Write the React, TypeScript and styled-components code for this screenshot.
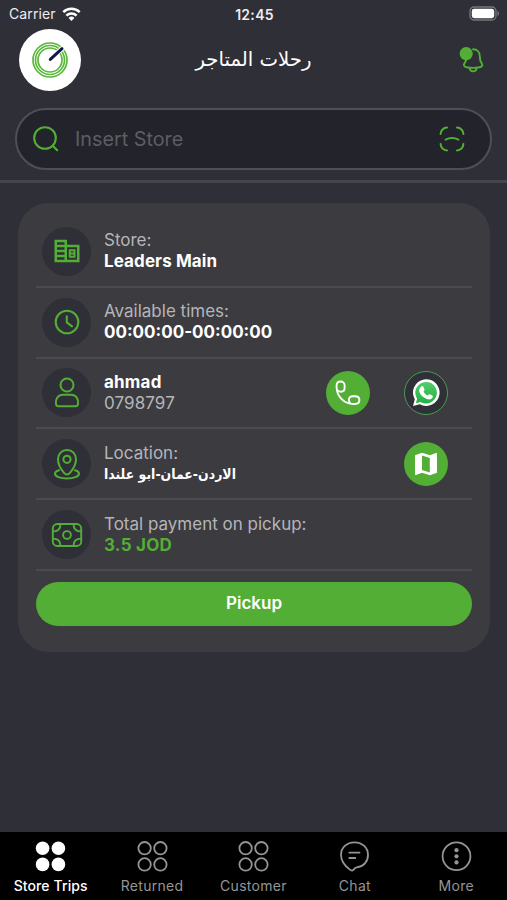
import React from "react";
import styled, { createGlobalStyle } from "styled-components";

const GREEN = "#53ae35";

const GlobalStyle = createGlobalStyle`
  * { box-sizing: border-box; }
  html, body { margin: 0; padding: 0; background: #2f2f38; }
  body { font-family: Inter, "DejaVu Sans", sans-serif; overflow: hidden; }
  svg { display: block; flex: none; }
`;

const Screen = styled.div`
  width: 507px;
  height: 900px;
  display: flex;
  flex-direction: column;
  background: #2f2f38;
  overflow: hidden;
`;

const StatusBar = styled.div`
  height: 28px;
  display: grid;
  grid-template-columns: 1fr auto 1fr;
  align-items: center;
  padding: 0 7px 0 9px;
  color: #ededf0;
`;

const Carrier = styled.div`
  display: flex;
  align-items: center;
  gap: 6px;
  font-size: 14px;
  letter-spacing: 0.12px;
  line-height: 16px;
`;

const Time = styled.div`
  font-size: 14px;
  font-weight: 600;
  letter-spacing: 0.3px;
`;

const BatterySlot = styled.div`
  display: flex;
  justify-content: flex-end;
  padding-bottom: 1px;
`;

const Header = styled.header`
  height: 64px;
  display: grid;
  grid-template-columns: 62px 1fr 62px;
  align-items: center;
  padding: 0 19px;
`;

const Logo = styled.div`
  width: 62px;
  height: 62px;
  border-radius: 50%;
  background: #fff;
  display: flex;
  align-items: center;
  justify-content: center;
`;

const Title = styled.h1`
  margin: 0;
  text-align: center;
  color: #fff;
  font-family: "DejaVu Sans", sans-serif;
  font-weight: 400;
  font-size: 19.7px;
  line-height: 28px;
`;

const BellSlot = styled.div`
  display: flex;
  justify-content: flex-end;
  padding-right: 3px;
`;

const SearchArea = styled.div`
  height: 91px;
  padding: 16px 15px 0;
  border-bottom: 3px solid #45454b;
`;

const SearchBox = styled.div`
  height: 62px;
  display: flex;
  align-items: center;
  border: 2px solid #4f4f56;
  border-radius: 31px;
  background: #22232b;
  padding: 0 25px 0 15px;
`;

const Placeholder = styled.span`
  flex: 1;
  margin-left: 15px;
  color: #5d5d63;
  font-size: 19.8px;
`;

const Card = styled.main`
  margin: 20px 17px 0 18px;
  height: 449px;
  border-radius: 31px;
  background: #3b3b40;
  padding: 14px 18px 0;
`;

const Row = styled.div`
  height: 70.8px;
  display: flex;
  align-items: center;
  padding: 0 24px 0 6px;
  border-bottom: 2px solid #4a4a50;
`;

const IconDisc = styled.div`
  width: 49px;
  height: 49px;
  flex: none;
  border-radius: 50%;
  background: #2f2f38;
  display: flex;
  align-items: center;
  justify-content: center;
`;

const Lines = styled.div`
  flex: 1;
  margin-left: 13px;
`;

const Line = styled.div<{ $tone?: "muted" | "strong" | "green"; $spacing?: number }>`
  height: 21px;
  line-height: 21px;
  white-space: nowrap;
  font-size: 17px;
  letter-spacing: ${(p) => p.$spacing ?? 0}px;
  font-weight: ${(p) => (p.$tone === "muted" ? 400 : 700)};
  color: ${(p) => (p.$tone === "muted" ? "#b5b5b8" : p.$tone === "green" ? GREEN : "#fff")};
`;

const ArabicLine = styled(Line)`
  font-family: "DejaVu Sans Condensed", "DejaVu Sans", sans-serif;
  font-stretch: condensed;
  font-size: 13.9px;
`;

const Actions = styled.div`
  display: flex;
  gap: 34px;
`;

const RoundButton = styled.button<{ $outline?: boolean }>`
  width: 44px;
  height: 44px;
  padding: 0;
  border-radius: 50%;
  border: ${(p) => (p.$outline ? "1.3px solid #4a9b52" : "0")};
  background: ${(p) => (p.$outline ? "#303039" : GREEN)};
  display: flex;
  align-items: center;
  justify-content: center;
`;

const PickupButton = styled.button`
  display: block;
  width: 436px;
  height: 44px;
  margin-top: 11px;
  padding: 0 0 2px;
  border: 0;
  border-radius: 22px;
  background: ${GREEN};
  color: #fff;
  font: 600 17px/20px Inter, sans-serif;
`;

const TabBar = styled.nav`
  height: 68px;
  margin-top: auto;
  flex: none;
  display: grid;
  grid-template-columns: repeat(5, 1fr);
  background: #000;
`;

const Tab = styled.div<{ $active?: boolean }>`
  display: flex;
  flex-direction: column;
  align-items: center;
  padding-top: 9px;
  gap: 6px;
  color: ${(p) => (p.$active ? "#fff" : "#959595")};
  font-size: 14px;
  font-weight: ${(p) => (p.$active ? 500 : 400)};
  line-height: 16px;
  letter-spacing: ${(p) => (p.$active ? 0.1 : 0.3)}px;
  white-space: nowrap;
`;

const Wifi = () => (
  <svg width="19" height="15" viewBox="0 0 19 15" fill="none" stroke="#fff" strokeWidth="2.5">
    <path d="M1.3 5.2a11.7 11.7 0 0 1 16.4 0" />
    <path d="M4.4 8.6a7.2 7.2 0 0 1 10.2 0" />
    <path d="M9.5 14 6.6 11a4.1 4.1 0 0 1 5.8 0Z" fill="#fff" stroke="none" />
  </svg>
);

const Battery = () => (
  <svg width="31" height="15" viewBox="0 0 31 15">
    <rect x="1" y="1" width="26" height="13" rx="4" fill="none" stroke="#77777e" strokeWidth="1.3" />
    <rect x="2.8" y="2.8" width="22.4" height="9.4" rx="2.4" fill="#fff" />
    <path d="M28.5 5v5c2.1-.8 2.1-4.2 0-5Z" fill="#77777e" />
  </svg>
);

const BrandMark = () => (
  <svg width="38" height="38" viewBox="0 0 38 38" fill="none">
    <g stroke="#58b83a" strokeWidth="1.7">
      <circle cx="19" cy="19" r="17" />
      <circle cx="19" cy="19" r="14.5" />
      <circle cx="19" cy="19" r="12" />
    </g>
    <path d="M25 13 32.5 6.3" stroke="#fff" strokeWidth="5" />
    <path d="M19.3 18.4 31 7.7" stroke="#111747" strokeWidth="3" strokeLinecap="round" />
  </svg>
);

const Bell = () => (
  <svg width="26" height="28" viewBox="0 0 26 28" fill="none" stroke={GREEN} strokeWidth="1.9" strokeLinecap="round" strokeLinejoin="round">
    <path d="M14 3.2c4.1 0 6.8 3.1 6.8 7.2 0 3.5.5 5 1.8 6.7 1.5 2 .7 3.7-2 4.200-4.300.7-8.700.7-13 0-2.800-.500-3.400-2.300-2-4.200C7 15.400 7.400 14 7.400 12" />
    <path d="M10.800 22.200c.2 4.200 6.500 4.200 6.700 0" />
    <circle cx="7.200" cy="7.600" r="6.600" fill={GREEN} stroke="none" />
  </svg>
);

const SearchIcon = () => (
  <svg width="28" height="28" viewBox="0 0 28 28" fill="none" stroke={GREEN} strokeWidth="2.1" strokeLinecap="round">
    <circle cx="13" cy="13" r="10.8" />
    <path d="m20.700 20.800 4.500 4.400" />
  </svg>
);

const ScanIcon = () => (
  <svg width="26" height="26" viewBox="0 0 26 26" fill="none" stroke={GREEN} strokeWidth="2" strokeLinecap="round">
    <path d="M1.600 8a6.600 6.600 0 0 1 6.400-6.400M18 1.600A6.600 6.600 0 0 1 24.400 8M24.400 18a6.600 6.600 0 0 1-6.400 6.400M8 24.400A6.600 6.600 0 0 1 1.600 18" />
    <path d="M6.600 13.600c4-2 8.800-2 12.800 0" />
  </svg>
);

const BuildingIcon = () => (
  <svg width="30" height="30" viewBox="0 0 24 24" fill={GREEN}>
    <path fillRule="evenodd" d="M12 7V3H2v18h20V7H12ZM10 19H4v-2h6v2Zm0-4H4v-2h6v2Zm0-4H4V9h6v2Zm0-4H4V5h6v2Zm10 12h-8V9h8v10Z" />
    <path fillRule="evenodd" d="M13.400 10.600h5.400v6.800h-5.400ZM15 12.200h2.200v1H15Zm0 2.500h2.200v1H15Z" />
  </svg>
);

const ClockIcon = () => (
  <svg width="26" height="26" viewBox="0 0 26 26" fill="none" stroke={GREEN} strokeWidth="2.1" strokeLinecap="round" strokeLinejoin="round">
    <circle cx="13" cy="13" r="11.300" />
    <path d="M12.800 7.200v6.100l5.200 4" />
  </svg>
);

const PersonIcon = () => (
  <svg width="26" height="32" viewBox="0 0 26 32" fill="none" stroke={GREEN} strokeWidth="2">
    <circle cx="13" cy="8" r="6.500" />
    <path d="M2 27c-.8-5.400 2.200-9.200 7-9.200h8c4.800 0 7.800 3.800 7 9.200-.2 1.700-.8 2.300-2.400 2.300H4.400C2.800 29.300 2.200 28.700 2 27Z" />
  </svg>
);

const PinIcon = () => (
  <svg width="28" height="32" viewBox="0 0 28 32" fill="none" stroke={GREEN} strokeWidth="2" strokeLinecap="round">
    <path d="M14 2c5.300 0 9 4 9 9.300 0 5-2.600 9.600-6 13.500-2 2.200-4 2.200-6 0-3.400-3.900-6-8.500-6-13.500C5 6 8.700 2 14 2Z" />
    <circle cx="14" cy="11.300" r="3.600" />
    <path d="M6 22.300c-3 .8-4 1.900-4 3.400 0 2.900 5.300 4.800 12 4.800s12-1.900 12-4.800c0-1.500-1-2.600-4-3.400" />
  </svg>
);

const CashIcon = () => (
  <svg width="32" height="26" viewBox="0 0 32 26" fill="none" stroke={GREEN} strokeWidth="1.9" strokeLinecap="round">
    <rect x="1.800" y="2" width="28.400" height="22" rx="4.500" />
    <circle cx="16" cy="13" r="3.900" />
    <path d="M2 9.400c4.700 0 7.400-2.700 7.400-7M30 9.400c-4.700 0-7.400-2.700-7.400-7M2 16.600c4.700 0 7.400 2.700 7.400 7M30 16.600c-4.700 0-7.400 2.700-7.400 7" />
  </svg>
);

const PhoneIcon = () => (
  <svg width="26" height="26" viewBox="0 0 26 26" fill="none" stroke="#fff" strokeWidth="1.900" strokeLinecap="round" strokeLinejoin="round">
    <path d="M1.600 7.500V5.600C1.600 3.100 3.300 1.500 5.600 1.500s4 1.600 4 4.100v2.500c0 2.300-1.500 3.600-3.600 3.600-1.700 0-3-.7-3.800-1.700M1.600 7.500C2 16.500 9 24 18.500 24h1.600c2.600 0 4.300-1.600 4.300-3.900s-1.700-3.900-4.300-3.900h-2.300c-2.500 0-4 1.400-4 3.600 0 1.400.5 2.500 1.500 3.600" />
  </svg>
);

const WhatsAppIcon = () => (
  <svg width="28" height="28" viewBox="0 0 28 28">
    <defs>
      <linearGradient id="chatFill" x1="0" x2="0" y1="0" y2="1">
        <stop offset="0" stopColor="#53ce6b" />
        <stop offset="1" stopColor="#24af43" />
      </linearGradient>
    </defs>
    <path d="M1 27 2.800 20.300A13.300 13.300 0 1 1 7.800 25.200Z" fill="#fff" />
    <path d="M3.900 24.200 5.100 19.700A10.800 10.800 0 1 1 8.400 22.900Z" fill="url(#chatFill)" />
    <path d="M9.100 7.700c.8-.8 1.900-.8 2.300.1l1.100 2.600c.2.600-.2 1.100-1 2 .9 1.900 2.400 3.300 4.400 4.200.8-1 1.200-1.500 1.800-1.300l2.700 1.300c.7.400.5 1.600-.1 2.500-1.200 1.600-3.600 1.700-6 .7-3.100-1.200-5.500-3.500-6.700-6.200-.9-2.200-.4-4.400 1.500-5.900Z" fill="#fff" />
  </svg>
);

const MapIcon = () => (
  <svg width="24" height="24" viewBox="0 0 24 24">
    <path d="M1 3.200 8 .7l8 2.600 6-2.300c.7-.2 1 .1 1 .7v19.100l-7 2.500-8-2.600-6 2.300c-.7.3-1 0-1-.7Z" fill="#fff" />
    <path d="M8 3.500 15.800 6v14.500L8 18Z" fill={GREEN} />
  </svg>
);

const FourDots = ({ filled }: { filled?: boolean }) => (
  <svg width="31" height="31" viewBox="0 0 31 31" fill={filled ? "currentColor" : "none"} stroke="currentColor" strokeWidth={filled ? 0 : 1.8}>
    {[7.2, 23.4].map((y) =>
      [7.6, 23.4].map((x) => <circle key={`${x}-${y}`} cx={x} cy={y} r={filled ? 6.8 : 6.2} />)
    )}
  </svg>
);

const ChatIcon = () => (
  <svg width="31" height="31" viewBox="0 0 31 31" fill="none" stroke="currentColor" strokeWidth="1.800" strokeLinecap="round" strokeLinejoin="round">
    <path d="M15.500 1.300C7.600 1.300 2 6.700 2 13.900c0 5.900 3.800 10.700 8.600 14.500 1.800 1.400 3.300 1.500 4.200.1.700-1.200 1.400-1.900 2.900-2.100C24.600 25.600 29 20.500 29 13.900 29 6.700 23.400 1.300 15.500 1.300Z" />
    <path d="M10.300 11.600h10.200M10.300 17h6" />
  </svg>
);

const MoreIcon = () => (
  <svg width="31" height="31" viewBox="0 0 31 31" fill="currentColor">
    <circle cx="15.500" cy="15.300" r="13.900" fill="none" stroke="currentColor" strokeWidth="1.800" />
    <circle cx="15.500" cy="9.200" r="2.100" />
    <circle cx="15.500" cy="15.300" r="2.100" />
    <circle cx="15.500" cy="21.400" r="2.100" />
  </svg>
);

export default function App() {
  return (
    <>
      <GlobalStyle />
      <Screen>
        <StatusBar>
          <Carrier>Carrier <Wifi /></Carrier>
          <Time>12:45</Time>
          <BatterySlot><Battery /></BatterySlot>
        </StatusBar>
        <Header>
          <Logo><BrandMark /></Logo>
          <Title dir="rtl">رحلات المتاجر</Title>
          <BellSlot><Bell /></BellSlot>
        </Header>
        <SearchArea>
          <SearchBox>
            <SearchIcon />
            <Placeholder>Insert Store</Placeholder>
            <ScanIcon />
          </SearchBox>
        </SearchArea>
        <Card>
          <Row>
            <IconDisc><BuildingIcon /></IconDisc>
            <Lines>
              <Line $tone="muted">Store:</Line>
              <Line $tone="strong" $spacing={0.1}>Leaders Main</Line>
            </Lines>
          </Row>
          <Row>
            <IconDisc><ClockIcon /></IconDisc>
            <Lines>
              <Line $tone="muted">Available times:</Line>
              <Line $tone="strong">00:00:00-00:00:00</Line>
            </Lines>
          </Row>
          <Row>
            <IconDisc><PersonIcon /></IconDisc>
            <Lines>
              <Line $tone="strong" $spacing={0.2}>ahmad</Line>
              <Line $tone="muted" $spacing={0.1}>0798797</Line>
            </Lines>
            <Actions>
              <RoundButton aria-label="Call"><PhoneIcon /></RoundButton>
              <RoundButton aria-label="WhatsApp" $outline><WhatsAppIcon /></RoundButton>
            </Actions>
          </Row>
          <Row>
            <IconDisc><PinIcon /></IconDisc>
            <Lines>
              <Line $tone="muted">Location:</Line>
              <ArabicLine $tone="strong"><bdi>الاردن-عمان-ابو علندا</bdi></ArabicLine>
            </Lines>
            <Actions>
              <RoundButton aria-label="Map"><MapIcon /></RoundButton>
            </Actions>
          </Row>
          <Row>
            <IconDisc><CashIcon /></IconDisc>
            <Lines>
              <Line $tone="muted">Total payment on pickup:</Line>
              <Line $tone="green" $spacing={0.25}>3.5 JOD</Line>
            </Lines>
          </Row>
          <PickupButton>Pickup</PickupButton>
        </Card>
        <TabBar>
          <Tab $active><FourDots filled />Store Trips</Tab>
          <Tab><FourDots />Returned</Tab>
          <Tab><FourDots />Customer</Tab>
          <Tab><ChatIcon />Chat</Tab>
          <Tab><MoreIcon />More</Tab>
        </TabBar>
      </Screen>
    </>
  );
}
